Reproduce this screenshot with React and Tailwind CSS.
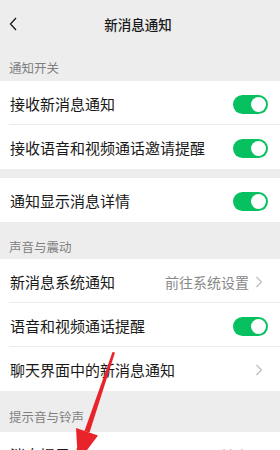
import React from 'react';

const Toggle = () => (
    <div className="w-[35px] h-[19px] rounded-full bg-[#07c160] flex items-center justify-end pr-[2px]">
        <div className="w-[15px] h-[15px] rounded-full bg-white" />
    </div>
);

const Chevron = () => (
    <svg width="8" height="12" viewBox="0 0 8 12" className="ml-[6px]">
        <path d="M1.5 1 L6.5 6 L1.5 11" fill="none" stroke="#b8b8b8" strokeWidth="1.1" />
    </svg>
);

const Row = ({ label, value, toggle, chevron, divider }) => (
    <div
        className={`relative h-[44px] flex items-center justify-between pl-[10px] pt-[2px] ${chevron ? 'pr-[17px]' : 'pr-[12px]'} bg-white`}
    >
        <span className="text-[15px] text-[#191919]">{label}</span>
        <div className="flex items-center">
            {value && <span className="text-[14px] text-[#888]">{value}</span>}
            {chevron && <Chevron />}
            {toggle && <Toggle />}
        </div>
        {divider && <div className="absolute left-[9px] right-0 bottom-0 h-px bg-[#ececec]" />}
    </div>
);

const SectionLabel = ({ children, className }) => (
    <div className={`${className} flex items-end pl-[9px] text-[12.5px] text-[#7f7f7f]`}>
        {children}
    </div>
);

export default function App() {
    return (
        <div
            className="relative w-[280px] h-[450px] overflow-hidden bg-[#ededed]"
            style={{ fontFamily: '"Noto Sans CJK SC", "Noto Sans", sans-serif' }}
        >
            {/* Header */}
            <div className="h-[46px] flex items-center relative pt-[2px]">
                <svg width="8" height="14" viewBox="0 0 8 14" className="absolute left-[9px] top-[17px]">
                    <path d="M7 1 L1.5 7 L7 13" fill="none" stroke="#191919" strokeWidth="1.3" />
                </svg>
                <div className="flex-1 text-center text-[13.5px] font-medium text-[#191919] pr-[4px]">新消息通知</div>
            </div>

            <SectionLabel className="h-[35px] pb-[3px]">通知开关</SectionLabel>
            <Row label="接收新消息通知" toggle divider />
            <Row label="接收语音和视频通话邀请提醒" toggle />

            <div className="h-[9px]" />
            <Row label="通知显示消息详情" toggle />

            <SectionLabel className="h-[37px] pb-[2px]">声音与震动</SectionLabel>
            <Row label="新消息系统通知" value="前往系统设置" chevron divider />
            <Row label="语音和视频通话提醒" toggle divider />
            <Row label="聊天界面中的新消息通知" chevron />

            <SectionLabel className="h-[41px] pb-[5px]">提示音与铃声</SectionLabel>
            <Row label="消息提示音" value="铃中" chevron />

            {/* annotation arrow */}
            <svg width="280" height="450" className="absolute left-0 top-0 pointer-events-none">
                <polygon points="112.5,352 115,352.5 89.5,432.5 84.5,431" fill="#e8232a" />
                <polygon points="76,428 98,435.5 78,462" fill="#e8232a" />
            </svg>
        </div>
    );
}
